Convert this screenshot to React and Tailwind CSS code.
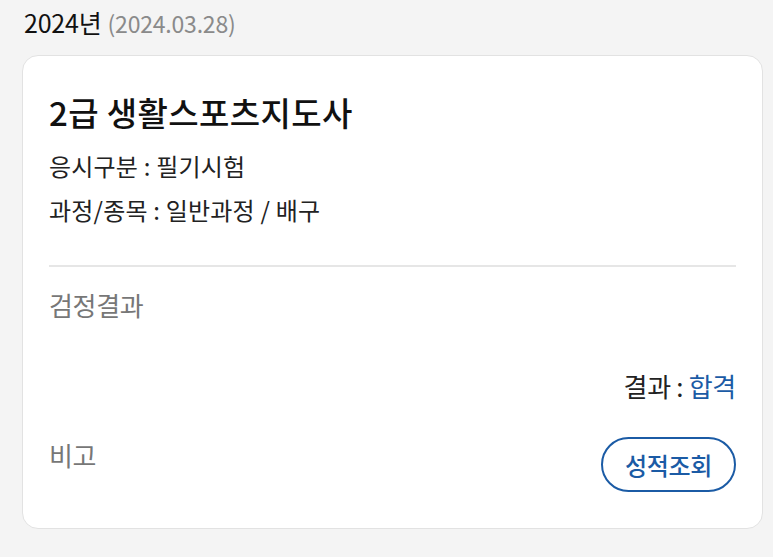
const App = () => {
    return (
        <div
            className="min-h-[557px] w-[773px] bg-[#f4f4f4] pl-[22px] pr-[10px] pt-[5px] pb-[28px] text-[#111]"
            style={{ fontFamily: '"Noto Sans CJK KR", "Noto Sans", sans-serif' }}
        >
            <h2 className="flex h-[34px] items-baseline gap-[6px] pl-[2px] leading-[34px]">
                <span className="text-[25px] font-normal tracking-[-0.2px]">2024년</span>
                <span className="text-[23px] tracking-[-0.2px] text-[#8a8a8a]">(2024.03.28)</span>
            </h2>

            <div className="mt-[16px] rounded-[16px] border border-[#e2e2e2] bg-white px-[26px] pt-[34px] pb-[36px]">
                <div className="text-[33px] font-medium leading-[44px] tracking-[0.4px] text-[#111]">
                    2급 생활스포츠지도사
                </div>
                <div className="mt-[10px] text-[24px] leading-[44px] tracking-[0.2px] text-[#222]">
                    <p>응시구분 : 필기시험</p>
                    <p>과정/종목 : 일반과정 / 배구</p>
                </div>

                <div className="mt-[33px] h-[2px] bg-[#e6e6e6]" />

                <div className="mt-[18px] text-[26px] leading-[40px] tracking-[-0.3px] text-[#777]">검정결과</div>
                <div className="mt-[43px] text-right text-[26px] leading-[36px] tracking-[-0.3px] text-[#222]">
                    결과 : <span className="text-[#1b5ba5]">합격</span>
                </div>

                <div className="mt-[33px] flex items-start justify-between">
                    <span className="text-[26px] leading-[36px] tracking-[-0.3px] text-[#777]">비고</span>
                    <button className="h-[55px] w-[135px] rounded-full border-2 border-[#1b5ba5] text-[24px] font-medium tracking-[-0.3px] text-[#1b5ba5]">
                        성적조회
                    </button>
                </div>
            </div>
        </div>
    );
};

export default App;
